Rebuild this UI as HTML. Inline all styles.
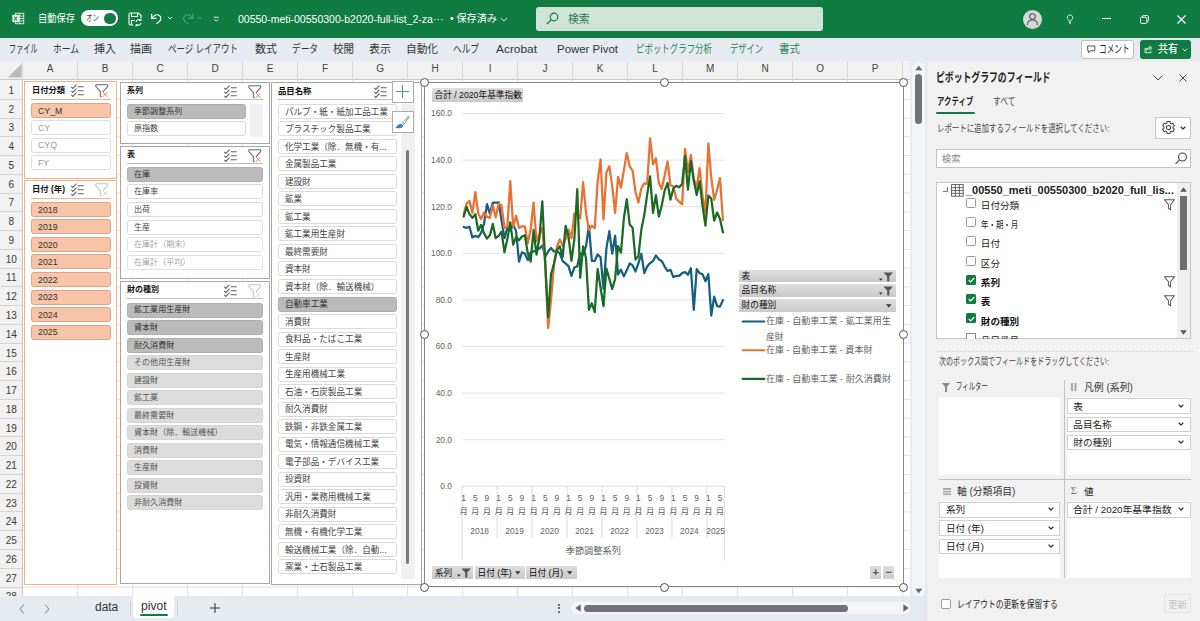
<!DOCTYPE html>
<html lang="ja"><head><meta charset="utf-8"><title>Excel</title>
<style>
*{box-sizing:border-box;margin:0;padding:0}
html,body{width:1200px;height:621px;overflow:hidden;background:#fff}
body{font-family:"Liberation Sans","Noto Sans CJK JP",sans-serif;font-size:12px;color:#222;position:relative}
.abs{position:absolute}
.t{position:absolute;white-space:nowrap;line-height:1}
svg{position:absolute;overflow:visible}
</style></head>
<body>
<!-- grid.build -->
<div class="abs " style="left:0px;top:61px;width:926px;height:535px;background:#fff"></div>
<div class="abs " style="left:0px;top:61px;width:910px;height:19px;background:#f1f1f1;border-bottom:1px solid #c8c8c8"></div>
<svg style="left:7.500px;top:64px" width="13.500" height="13.500" viewBox="0 0 14 14"><path d="M14 0v14H0z" fill="#b9b9b9"/></svg>
<div class="abs " style="left:22.1px;top:61px;width:1px;height:19px;background:#d6d6d6"></div>
<div class="t" style="left:-49.9px;width:200px;text-align:center;top:64.30px;font-size:10px;color:#444;">A</div>
<div class="abs " style="left:77.1px;top:61px;width:1px;height:19px;background:#d6d6d6"></div>
<div class="t" style="left:5.099999999999994px;width:200px;text-align:center;top:64.30px;font-size:10px;color:#444;">B</div>
<div class="abs " style="left:132.1px;top:61px;width:1px;height:19px;background:#d6d6d6"></div>
<div class="t" style="left:60.099999999999994px;width:200px;text-align:center;top:64.30px;font-size:10px;color:#444;">C</div>
<div class="abs " style="left:187.1px;top:61px;width:1px;height:19px;background:#d6d6d6"></div>
<div class="t" style="left:115.1px;width:200px;text-align:center;top:64.30px;font-size:10px;color:#444;">D</div>
<div class="abs " style="left:242.1px;top:61px;width:1px;height:19px;background:#d6d6d6"></div>
<div class="t" style="left:170.10000000000002px;width:200px;text-align:center;top:64.30px;font-size:10px;color:#444;">E</div>
<div class="abs " style="left:297.1px;top:61px;width:1px;height:19px;background:#d6d6d6"></div>
<div class="t" style="left:225.10000000000002px;width:200px;text-align:center;top:64.30px;font-size:10px;color:#444;">F</div>
<div class="abs " style="left:352.1px;top:61px;width:1px;height:19px;background:#d6d6d6"></div>
<div class="t" style="left:280.1px;width:200px;text-align:center;top:64.30px;font-size:10px;color:#444;">G</div>
<div class="abs " style="left:407.1px;top:61px;width:1px;height:19px;background:#d6d6d6"></div>
<div class="t" style="left:335.1px;width:200px;text-align:center;top:64.30px;font-size:10px;color:#444;">H</div>
<div class="abs " style="left:462.1px;top:61px;width:1px;height:19px;background:#d6d6d6"></div>
<div class="t" style="left:390.1px;width:200px;text-align:center;top:64.30px;font-size:10px;color:#444;">I</div>
<div class="abs " style="left:517.1px;top:61px;width:1px;height:19px;background:#d6d6d6"></div>
<div class="t" style="left:445.1px;width:200px;text-align:center;top:64.30px;font-size:10px;color:#444;">J</div>
<div class="abs " style="left:572.1px;top:61px;width:1px;height:19px;background:#d6d6d6"></div>
<div class="t" style="left:500.1px;width:200px;text-align:center;top:64.30px;font-size:10px;color:#444;">K</div>
<div class="abs " style="left:627.1px;top:61px;width:1px;height:19px;background:#d6d6d6"></div>
<div class="t" style="left:555.1px;width:200px;text-align:center;top:64.30px;font-size:10px;color:#444;">L</div>
<div class="abs " style="left:682.1px;top:61px;width:1px;height:19px;background:#d6d6d6"></div>
<div class="t" style="left:610.1px;width:200px;text-align:center;top:64.30px;font-size:10px;color:#444;">M</div>
<div class="abs " style="left:737.1px;top:61px;width:1px;height:19px;background:#d6d6d6"></div>
<div class="t" style="left:665.1px;width:200px;text-align:center;top:64.30px;font-size:10px;color:#444;">N</div>
<div class="abs " style="left:792.1px;top:61px;width:1px;height:19px;background:#d6d6d6"></div>
<div class="t" style="left:720.1px;width:200px;text-align:center;top:64.30px;font-size:10px;color:#444;">O</div>
<div class="abs " style="left:847.1px;top:61px;width:1px;height:19px;background:#d6d6d6"></div>
<div class="t" style="left:775.1px;width:200px;text-align:center;top:64.30px;font-size:10px;color:#444;">P</div>
<div class="abs " style="left:902.1px;top:61px;width:1px;height:19px;background:#d6d6d6"></div>
<div class="abs " style="left:0px;top:80px;width:23px;height:516px;background:#f1f1f1;border-right:1px solid #c8c8c8"></div>
<div class="t" style="left:-88.7px;width:200px;text-align:center;top:85.88px;font-size:10px;color:#3a3a3a;">1</div>
<div class="abs " style="left:0px;top:98.76px;width:22.5px;height:1px;background:#d4d4d4"></div>
<div class="t" style="left:-88.7px;width:200px;text-align:center;top:104.64px;font-size:10px;color:#3a3a3a;">2</div>
<div class="abs " style="left:0px;top:117.52000000000001px;width:22.5px;height:1px;background:#d4d4d4"></div>
<div class="t" style="left:-88.7px;width:200px;text-align:center;top:123.40px;font-size:10px;color:#3a3a3a;">3</div>
<div class="abs " style="left:0px;top:136.28px;width:22.5px;height:1px;background:#d4d4d4"></div>
<div class="t" style="left:-88.7px;width:200px;text-align:center;top:142.16px;font-size:10px;color:#3a3a3a;">4</div>
<div class="abs " style="left:0px;top:155.04000000000002px;width:22.5px;height:1px;background:#d4d4d4"></div>
<div class="t" style="left:-88.7px;width:200px;text-align:center;top:160.92px;font-size:10px;color:#3a3a3a;">5</div>
<div class="abs " style="left:0px;top:173.8px;width:22.5px;height:1px;background:#d4d4d4"></div>
<div class="t" style="left:-88.7px;width:200px;text-align:center;top:179.68px;font-size:10px;color:#3a3a3a;">6</div>
<div class="abs " style="left:0px;top:192.56px;width:22.5px;height:1px;background:#d4d4d4"></div>
<div class="t" style="left:-88.7px;width:200px;text-align:center;top:198.44px;font-size:10px;color:#3a3a3a;">7</div>
<div class="abs " style="left:0px;top:211.32000000000002px;width:22.5px;height:1px;background:#d4d4d4"></div>
<div class="t" style="left:-88.7px;width:200px;text-align:center;top:217.20px;font-size:10px;color:#3a3a3a;">8</div>
<div class="abs " style="left:0px;top:230.08px;width:22.5px;height:1px;background:#d4d4d4"></div>
<div class="t" style="left:-88.7px;width:200px;text-align:center;top:235.96px;font-size:10px;color:#3a3a3a;">9</div>
<div class="abs " style="left:0px;top:248.84px;width:22.5px;height:1px;background:#d4d4d4"></div>
<div class="t" style="left:-88.7px;width:200px;text-align:center;top:254.72px;font-size:10px;color:#3a3a3a;">10</div>
<div class="abs " style="left:0px;top:267.6px;width:22.5px;height:1px;background:#d4d4d4"></div>
<div class="t" style="left:-88.7px;width:200px;text-align:center;top:273.48px;font-size:10px;color:#3a3a3a;">11</div>
<div class="abs " style="left:0px;top:286.36px;width:22.5px;height:1px;background:#d4d4d4"></div>
<div class="t" style="left:-88.7px;width:200px;text-align:center;top:292.24px;font-size:10px;color:#3a3a3a;">12</div>
<div class="abs " style="left:0px;top:305.12px;width:22.5px;height:1px;background:#d4d4d4"></div>
<div class="t" style="left:-88.7px;width:200px;text-align:center;top:311.00px;font-size:10px;color:#3a3a3a;">13</div>
<div class="abs " style="left:0px;top:323.88px;width:22.5px;height:1px;background:#d4d4d4"></div>
<div class="t" style="left:-88.7px;width:200px;text-align:center;top:329.76px;font-size:10px;color:#3a3a3a;">14</div>
<div class="abs " style="left:0px;top:342.64000000000004px;width:22.5px;height:1px;background:#d4d4d4"></div>
<div class="t" style="left:-88.7px;width:200px;text-align:center;top:348.52px;font-size:10px;color:#3a3a3a;">15</div>
<div class="abs " style="left:0px;top:361.40000000000003px;width:22.5px;height:1px;background:#d4d4d4"></div>
<div class="t" style="left:-88.7px;width:200px;text-align:center;top:367.28px;font-size:10px;color:#3a3a3a;">16</div>
<div class="abs " style="left:0px;top:380.16px;width:22.5px;height:1px;background:#d4d4d4"></div>
<div class="t" style="left:-88.7px;width:200px;text-align:center;top:386.04px;font-size:10px;color:#3a3a3a;">17</div>
<div class="abs " style="left:0px;top:398.92px;width:22.5px;height:1px;background:#d4d4d4"></div>
<div class="t" style="left:-88.7px;width:200px;text-align:center;top:404.80px;font-size:10px;color:#3a3a3a;">18</div>
<div class="abs " style="left:0px;top:417.68px;width:22.5px;height:1px;background:#d4d4d4"></div>
<div class="t" style="left:-88.7px;width:200px;text-align:center;top:423.56px;font-size:10px;color:#3a3a3a;">19</div>
<div class="abs " style="left:0px;top:436.44000000000005px;width:22.5px;height:1px;background:#d4d4d4"></div>
<div class="t" style="left:-88.7px;width:200px;text-align:center;top:442.32px;font-size:10px;color:#3a3a3a;">20</div>
<div class="abs " style="left:0px;top:455.20000000000005px;width:22.5px;height:1px;background:#d4d4d4"></div>
<div class="t" style="left:-88.7px;width:200px;text-align:center;top:461.08px;font-size:10px;color:#3a3a3a;">21</div>
<div class="abs " style="left:0px;top:473.96000000000004px;width:22.5px;height:1px;background:#d4d4d4"></div>
<div class="t" style="left:-88.7px;width:200px;text-align:center;top:479.84px;font-size:10px;color:#3a3a3a;">22</div>
<div class="abs " style="left:0px;top:492.72px;width:22.5px;height:1px;background:#d4d4d4"></div>
<div class="t" style="left:-88.7px;width:200px;text-align:center;top:498.60px;font-size:10px;color:#3a3a3a;">23</div>
<div class="abs " style="left:0px;top:511.48px;width:22.5px;height:1px;background:#d4d4d4"></div>
<div class="t" style="left:-88.7px;width:200px;text-align:center;top:517.36px;font-size:10px;color:#3a3a3a;">24</div>
<div class="abs " style="left:0px;top:530.24px;width:22.5px;height:1px;background:#d4d4d4"></div>
<div class="t" style="left:-88.7px;width:200px;text-align:center;top:536.12px;font-size:10px;color:#3a3a3a;">25</div>
<div class="abs " style="left:0px;top:549.0px;width:22.5px;height:1px;background:#d4d4d4"></div>
<div class="t" style="left:-88.7px;width:200px;text-align:center;top:554.88px;font-size:10px;color:#3a3a3a;">26</div>
<div class="abs " style="left:0px;top:567.76px;width:22.5px;height:1px;background:#d4d4d4"></div>
<div class="t" style="left:-88.7px;width:200px;text-align:center;top:573.64px;font-size:10px;color:#3a3a3a;">27</div>
<div class="abs " style="left:0px;top:586.52px;width:22.5px;height:1px;background:#d4d4d4"></div>
<div class="t" style="left:-88.7px;width:200px;text-align:center;top:592.40px;font-size:10px;color:#3a3a3a;">28</div>
<div class="abs " style="left:0px;top:605.2800000000001px;width:22.5px;height:1px;background:#d4d4d4"></div>
<svg style="left:0;top:0" width="926" height="596" stroke="#e1e1e1" stroke-width="1" fill="none"><path d="M23 99.26H910"/><path d="M23 118.02H910"/><path d="M23 136.78H910"/><path d="M23 155.54H910"/><path d="M23 174.30H910"/><path d="M23 193.06H910"/><path d="M23 211.82H910"/><path d="M23 230.58H910"/><path d="M23 249.34H910"/><path d="M23 268.10H910"/><path d="M23 286.86H910"/><path d="M23 305.62H910"/><path d="M23 324.38H910"/><path d="M23 343.14H910"/><path d="M23 361.90H910"/><path d="M23 380.66H910"/><path d="M23 399.42H910"/><path d="M23 418.18H910"/><path d="M23 436.94H910"/><path d="M23 455.70H910"/><path d="M23 474.46H910"/><path d="M23 493.22H910"/><path d="M23 511.98H910"/><path d="M23 530.74H910"/><path d="M23 549.50H910"/><path d="M23 568.26H910"/><path d="M23 587.02H910"/><path d="M23 605.78H910"/><path d="M77.6 80V596"/><path d="M132.6 80V596"/><path d="M187.6 80V596"/><path d="M242.6 80V596"/><path d="M297.6 80V596"/><path d="M352.6 80V596"/><path d="M407.6 80V596"/><path d="M462.6 80V596"/><path d="M517.6 80V596"/><path d="M572.6 80V596"/><path d="M627.6 80V596"/><path d="M682.6 80V596"/><path d="M737.6 80V596"/><path d="M792.6 80V596"/><path d="M847.6 80V596"/><path d="M902.6 80V596"/></svg>
<!-- slicers.build -->
<div class="abs " style="left:23.7px;top:81px;width:93.8px;height:97.5px;background:#fff;border:1px solid #f4b183"></div>
<div class="t" style="left:32px;top:85.85px;font-size:8.5px;color:#111;font-weight:700;transform:scaleX(0.9701);transform-origin:0 50%;">日付分類</div>
<svg style="left:71px;top:83.5px" width="14" height="13" viewBox="0 0 14 13" fill="none" stroke="#606060" stroke-width="1.050"><path d="M6.700 2.700h6M6.700 6.700h6M6.700 10.700h6"/><path d="M.3 2.9l1.500 1.500L5.500 0.6999999999999997M.3 6.9l1.500 1.500L5.500 4.7M.3 10.9l1.500 1.500L5.500 8.7" stroke-width="1.050"/></svg>
<svg style="left:95px;top:83.5px" width="14" height="14" viewBox="0 0 14 14" fill="none"><path d="M5.300 12.600V7.400L.8 2.600V1.300Q.8.800 1.300.8H12.200Q12.700.8 12.700 1.300V2.600L8 7.600" stroke="#6a6a6a" stroke-width="1.100"/><path d="M5.300 12.600H6.600" stroke="#6a6a6a" stroke-width="1.100"/><path d="M7.900 8.100l4.600 4.600M12.500 8.100L7.900 12.700" stroke="#e8703a" stroke-width="0.9"/></svg>
<div class="abs " style="left:31px;top:98.5px;width:80px;height:1px;background:#f4b183"></div>
<div class="abs " style="left:31px;top:103.0px;width:80px;height:15px;background:#f8c4a8;border:1px solid #d9a58b;border-radius:2.500px"></div>
<div class="t" style="left:38px;top:106.60px;font-size:8.8px;color:#333;">CY_M</div>
<div class="abs " style="left:31px;top:120.4px;width:80px;height:15px;background:#fff;border:1px solid #dedede;border-radius:2.500px"></div>
<div class="t" style="left:38px;top:124.00px;font-size:8.8px;color:#9a9a9a;">CY</div>
<div class="abs " style="left:31px;top:137.8px;width:80px;height:15px;background:#fff;border:1px solid #dedede;border-radius:2.500px"></div>
<div class="t" style="left:38px;top:141.40px;font-size:8.8px;color:#9a9a9a;">CYQ</div>
<div class="abs " style="left:31px;top:155.2px;width:80px;height:15px;background:#fff;border:1px solid #dedede;border-radius:2.500px"></div>
<div class="t" style="left:38px;top:158.80px;font-size:8.8px;color:#9a9a9a;">FY</div>
<div class="abs " style="left:23.7px;top:180.2px;width:93.8px;height:404.8px;background:#fff;border:1px solid #f4b183"></div>
<div class="t" style="left:32px;top:185.05px;font-size:8.5px;color:#111;font-weight:700;transform:scaleX(0.9842);transform-origin:0 50%;">日付 (年)</div>
<svg style="left:71px;top:182.7px" width="14" height="13" viewBox="0 0 14 13" fill="none" stroke="#606060" stroke-width="1.050"><path d="M6.700 2.700h6M6.700 6.700h6M6.700 10.700h6"/><path d="M.3 2.9l1.500 1.500L5.500 0.6999999999999997M.3 6.9l1.500 1.500L5.500 4.7M.3 10.9l1.500 1.500L5.500 8.7" stroke-width="1.050"/></svg>
<svg style="left:95px;top:182.7px" width="14" height="14" viewBox="0 0 14 14" fill="none"><path d="M5.300 12.600V7.400L.8 2.600V1.300Q.8.800 1.300.8H12.200Q12.700.8 12.700 1.300V2.600L8 7.600" stroke="#c4c4c4" stroke-width="1.100"/><path d="M5.300 12.600H6.600" stroke="#c4c4c4" stroke-width="1.100"/><path d="M7.900 8.100l4.600 4.600M12.500 8.100L7.900 12.700" stroke="#d0d0d0" stroke-width="0.9"/></svg>
<div class="abs " style="left:31px;top:197.7px;width:80px;height:1px;background:#f4b183"></div>
<div class="abs " style="left:31px;top:201.9px;width:80px;height:15px;background:#f8c4a8;border:1px solid #d9a58b;border-radius:2.500px"></div>
<div class="t" style="left:38px;top:205.50px;font-size:8.8px;color:#333;">2018</div>
<div class="abs " style="left:31px;top:219.42000000000002px;width:80px;height:15px;background:#f8c4a8;border:1px solid #d9a58b;border-radius:2.500px"></div>
<div class="t" style="left:38px;top:223.02px;font-size:8.8px;color:#333;">2019</div>
<div class="abs " style="left:31px;top:236.94px;width:80px;height:15px;background:#f8c4a8;border:1px solid #d9a58b;border-radius:2.500px"></div>
<div class="t" style="left:38px;top:240.54px;font-size:8.8px;color:#333;">2020</div>
<div class="abs " style="left:31px;top:254.46000000000004px;width:80px;height:15px;background:#f8c4a8;border:1px solid #d9a58b;border-radius:2.500px"></div>
<div class="t" style="left:38px;top:258.06px;font-size:8.8px;color:#333;">2021</div>
<div class="abs " style="left:31px;top:271.98px;width:80px;height:15px;background:#f8c4a8;border:1px solid #d9a58b;border-radius:2.500px"></div>
<div class="t" style="left:38px;top:275.58px;font-size:8.8px;color:#333;">2022</div>
<div class="abs " style="left:31px;top:289.5px;width:80px;height:15px;background:#f8c4a8;border:1px solid #d9a58b;border-radius:2.500px"></div>
<div class="t" style="left:38px;top:293.10px;font-size:8.8px;color:#333;">2023</div>
<div class="abs " style="left:31px;top:307.02px;width:80px;height:15px;background:#f8c4a8;border:1px solid #d9a58b;border-radius:2.500px"></div>
<div class="t" style="left:38px;top:310.62px;font-size:8.8px;color:#333;">2024</div>
<div class="abs " style="left:31px;top:324.54px;width:80px;height:15px;background:#f8c4a8;border:1px solid #d9a58b;border-radius:2.500px"></div>
<div class="t" style="left:38px;top:328.14px;font-size:8.8px;color:#333;">2025</div>
<div class="abs " style="left:120px;top:82.4px;width:149.8px;height:61.79999999999998px;background:#fff;border:1px solid #a6a6a6"></div>
<div class="t" style="left:127px;top:87.40px;font-size:8.0px;color:#111;font-weight:700;">系列</div>
<svg style="left:224px;top:85.4px" width="14" height="13" viewBox="0 0 14 13" fill="none" stroke="#606060" stroke-width="1.050"><path d="M6.700 2.700h6M6.700 6.700h6M6.700 10.700h6"/><path d="M.3 2.9l1.500 1.500L5.500 0.6999999999999997M.3 6.9l1.500 1.500L5.500 4.7M.3 10.9l1.500 1.500L5.500 8.7" stroke-width="1.050"/></svg>
<svg style="left:247.5px;top:85.4px" width="14" height="14" viewBox="0 0 14 14" fill="none"><path d="M5.300 12.600V7.400L.8 2.600V1.300Q.8.800 1.300.8H12.200Q12.700.8 12.700 1.300V2.600L8 7.600" stroke="#6a6a6a" stroke-width="1.100"/><path d="M5.300 12.600H6.600" stroke="#6a6a6a" stroke-width="1.100"/><path d="M7.900 8.100l4.600 4.600M12.500 8.100L7.900 12.700" stroke="#e8703a" stroke-width="0.9"/></svg>
<div class="abs " style="left:127px;top:99.2px;width:136.3px;height:1px;background:#bfbfbf"></div>
<div class="abs " style="left:127px;top:103.8px;width:119px;height:15px;background:#bbbbbb;border:1px solid #afafaf;border-radius:2.500px"></div>
<div class="t" style="left:134px;top:107.77px;font-size:8.05px;color:#333;">季節調整系列</div>
<div class="abs " style="left:127px;top:121.19999999999999px;width:119px;height:15px;background:#fff;border:1px solid #dadada;border-radius:2.500px"></div>
<div class="t" style="left:134px;top:125.17px;font-size:8.05px;color:#444;">原指数</div>
<div class="abs " style="left:249.5px;top:104px;width:13.5px;height:32.5px;background:#f0f0f0"></div>
<div class="abs " style="left:120px;top:146px;width:149.8px;height:133px;background:#fff;border:1px solid #a6a6a6"></div>
<div class="t" style="left:127px;top:151.00px;font-size:8.0px;color:#111;font-weight:700;">表</div>
<svg style="left:224px;top:149px" width="14" height="13" viewBox="0 0 14 13" fill="none" stroke="#606060" stroke-width="1.050"><path d="M6.700 2.700h6M6.700 6.700h6M6.700 10.700h6"/><path d="M.3 2.9l1.500 1.500L5.500 0.6999999999999997M.3 6.9l1.500 1.500L5.500 4.7M.3 10.9l1.500 1.500L5.500 8.7" stroke-width="1.050"/></svg>
<svg style="left:247.5px;top:149px" width="14" height="14" viewBox="0 0 14 14" fill="none"><path d="M5.300 12.600V7.400L.8 2.600V1.300Q.8.800 1.300.8H12.200Q12.700.8 12.700 1.300V2.600L8 7.600" stroke="#6a6a6a" stroke-width="1.100"/><path d="M5.300 12.600H6.600" stroke="#6a6a6a" stroke-width="1.100"/><path d="M7.900 8.100l4.600 4.600M12.500 8.100L7.900 12.700" stroke="#e8703a" stroke-width="0.9"/></svg>
<div class="abs " style="left:127px;top:162.8px;width:136.3px;height:1px;background:#bfbfbf"></div>
<div class="abs " style="left:127px;top:166.9px;width:136px;height:15px;background:#bbbbbb;border:1px solid #afafaf;border-radius:2.500px"></div>
<div class="t" style="left:134px;top:170.88px;font-size:8.05px;color:#333;">在庫</div>
<div class="abs " style="left:127px;top:184.45000000000002px;width:136px;height:15px;background:#fff;border:1px solid #dadada;border-radius:2.500px"></div>
<div class="t" style="left:134px;top:188.43px;font-size:8.05px;color:#444;">在庫率</div>
<div class="abs " style="left:127px;top:202.0px;width:136px;height:15px;background:#fff;border:1px solid #dadada;border-radius:2.500px"></div>
<div class="t" style="left:134px;top:205.97px;font-size:8.05px;color:#444;">出荷</div>
<div class="abs " style="left:127px;top:219.55px;width:136px;height:15px;background:#fff;border:1px solid #dadada;border-radius:2.500px"></div>
<div class="t" style="left:134px;top:223.53px;font-size:8.05px;color:#444;">生産</div>
<div class="abs " style="left:127px;top:237.10000000000002px;width:136px;height:15px;background:#fff;border:1px solid #e1e1e1;border-radius:2.500px"></div>
<div class="t" style="left:134px;top:241.08px;font-size:8.05px;color:#a5a5a5;">在庫計（期末）</div>
<div class="abs " style="left:127px;top:254.64999999999998px;width:136px;height:15px;background:#fff;border:1px solid #e1e1e1;border-radius:2.500px"></div>
<div class="t" style="left:134px;top:258.62px;font-size:8.05px;color:#a5a5a5;">在庫計（平均）</div>
<div class="abs " style="left:120px;top:281.3px;width:149.8px;height:303.2px;background:#fff;border:1px solid #a6a6a6"></div>
<div class="t" style="left:127px;top:286.30px;font-size:8.0px;color:#111;font-weight:700;">財の種別</div>
<svg style="left:224px;top:284.3px" width="14" height="13" viewBox="0 0 14 13" fill="none" stroke="#606060" stroke-width="1.050"><path d="M6.700 2.700h6M6.700 6.700h6M6.700 10.700h6"/><path d="M.3 2.9l1.500 1.500L5.500 0.6999999999999997M.3 6.9l1.500 1.500L5.500 4.7M.3 10.9l1.500 1.500L5.500 8.7" stroke-width="1.050"/></svg>
<svg style="left:247.5px;top:284.3px" width="14" height="14" viewBox="0 0 14 14" fill="none"><path d="M5.300 12.600V7.400L.8 2.600V1.300Q.8.800 1.300.8H12.200Q12.700.8 12.700 1.300V2.600L8 7.600" stroke="#c4c4c4" stroke-width="1.100"/><path d="M5.300 12.600H6.600" stroke="#c4c4c4" stroke-width="1.100"/><path d="M7.900 8.100l4.600 4.600M12.500 8.100L7.900 12.700" stroke="#d0d0d0" stroke-width="0.9"/></svg>
<div class="abs " style="left:127px;top:298.1px;width:136.3px;height:1px;background:#bfbfbf"></div>
<div class="abs " style="left:127px;top:302.5px;width:136px;height:15px;background:#bbbbbb;border:1px solid #afafaf;border-radius:2.500px"></div>
<div class="t" style="left:134px;top:306.48px;font-size:8.05px;color:#333;">鉱工業用生産財</div>
<div class="abs " style="left:127px;top:320.02px;width:136px;height:15px;background:#bbbbbb;border:1px solid #afafaf;border-radius:2.500px"></div>
<div class="t" style="left:134px;top:324.00px;font-size:8.05px;color:#333;">資本財</div>
<div class="abs " style="left:127px;top:337.54px;width:136px;height:15px;background:#bbbbbb;border:1px solid #afafaf;border-radius:2.500px"></div>
<div class="t" style="left:134px;top:341.52px;font-size:8.05px;color:#333;">耐久消費財</div>
<div class="abs " style="left:127px;top:355.06px;width:136px;height:15px;background:#dcdcdc;border:1px solid #d4d4d4;border-radius:2.500px"></div>
<div class="t" style="left:134px;top:359.04px;font-size:8.05px;color:#555;">その他用生産財</div>
<div class="abs " style="left:127px;top:372.58px;width:136px;height:15px;background:#dcdcdc;border:1px solid #d4d4d4;border-radius:2.500px"></div>
<div class="t" style="left:134px;top:376.56px;font-size:8.05px;color:#555;">建設財</div>
<div class="abs " style="left:127px;top:390.1px;width:136px;height:15px;background:#dcdcdc;border:1px solid #d4d4d4;border-radius:2.500px"></div>
<div class="t" style="left:134px;top:394.08px;font-size:8.05px;color:#555;">鉱工業</div>
<div class="abs " style="left:127px;top:407.62px;width:136px;height:15px;background:#dcdcdc;border:1px solid #d4d4d4;border-radius:2.500px"></div>
<div class="t" style="left:134px;top:411.60px;font-size:8.05px;color:#555;">最終需要財</div>
<div class="abs " style="left:127px;top:425.14px;width:136px;height:15px;background:#dcdcdc;border:1px solid #d4d4d4;border-radius:2.500px"></div>
<div class="t" style="left:134px;top:429.12px;font-size:8.05px;color:#555;">資本財（除．輸送機械）</div>
<div class="abs " style="left:127px;top:442.65999999999997px;width:136px;height:15px;background:#dcdcdc;border:1px solid #d4d4d4;border-radius:2.500px"></div>
<div class="t" style="left:134px;top:446.63px;font-size:8.05px;color:#555;">消費財</div>
<div class="abs " style="left:127px;top:460.18px;width:136px;height:15px;background:#dcdcdc;border:1px solid #d4d4d4;border-radius:2.500px"></div>
<div class="t" style="left:134px;top:464.16px;font-size:8.05px;color:#555;">生産財</div>
<div class="abs " style="left:127px;top:477.7px;width:136px;height:15px;background:#dcdcdc;border:1px solid #d4d4d4;border-radius:2.500px"></div>
<div class="t" style="left:134px;top:481.68px;font-size:8.05px;color:#555;">投資財</div>
<div class="abs " style="left:127px;top:495.22px;width:136px;height:15px;background:#dcdcdc;border:1px solid #d4d4d4;border-radius:2.500px"></div>
<div class="t" style="left:134px;top:499.20px;font-size:8.05px;color:#555;">非耐久消費財</div>
<div class="abs " style="left:271px;top:82.4px;width:150.5px;height:502.6px;background:#fff;border:1px solid #a6a6a6"></div>
<div class="t" style="left:277.9px;top:87.20px;font-size:8.4px;color:#111;font-weight:700;">品目名称</div>
<svg style="left:374px;top:85.4px" width="14" height="13" viewBox="0 0 14 13" fill="none" stroke="#606060" stroke-width="1.050"><path d="M6.700 2.700h6M6.700 6.700h6M6.700 10.700h6"/><path d="M.3 2.9l1.500 1.500L5.500 0.6999999999999997M.3 6.9l1.500 1.500L5.500 4.7M.3 10.9l1.500 1.500L5.500 8.7" stroke-width="1.050"/></svg>
<div class="abs " style="left:277.9px;top:99.2px;width:137.10000000000002px;height:1px;background:#bfbfbf"></div>
<div class="abs " style="left:277.9px;top:103.8px;width:119.60000000000002px;height:15px;background:#fff;border:1px solid #dadada;border-radius:2.500px"></div>
<div class="t" style="left:284.9px;top:107.50px;font-size:8.6px;color:#444;">パルプ・紙・紙加工品工業</div>
<div class="abs " style="left:277.9px;top:121.32px;width:119.60000000000002px;height:15px;background:#fff;border:1px solid #dadada;border-radius:2.500px"></div>
<div class="t" style="left:284.9px;top:125.02px;font-size:8.6px;color:#444;">プラスチック製品工業</div>
<div class="abs " style="left:277.9px;top:138.84px;width:119.60000000000002px;height:15px;background:#fff;border:1px solid #dadada;border-radius:2.500px"></div>
<div class="t" style="left:284.9px;top:142.54px;font-size:8.6px;color:#444;">化学工業（除．無機・有...</div>
<div class="abs " style="left:277.9px;top:156.36px;width:119.60000000000002px;height:15px;background:#fff;border:1px solid #dadada;border-radius:2.500px"></div>
<div class="t" style="left:284.9px;top:160.06px;font-size:8.6px;color:#444;">金属製品工業</div>
<div class="abs " style="left:277.9px;top:173.88px;width:119.60000000000002px;height:15px;background:#fff;border:1px solid #dadada;border-radius:2.500px"></div>
<div class="t" style="left:284.9px;top:177.58px;font-size:8.6px;color:#444;">建設財</div>
<div class="abs " style="left:277.9px;top:191.39999999999998px;width:119.60000000000002px;height:15px;background:#fff;border:1px solid #dadada;border-radius:2.500px"></div>
<div class="t" style="left:284.9px;top:195.10px;font-size:8.6px;color:#444;">鉱業</div>
<div class="abs " style="left:277.9px;top:208.92000000000002px;width:119.60000000000002px;height:15px;background:#fff;border:1px solid #dadada;border-radius:2.500px"></div>
<div class="t" style="left:284.9px;top:212.62px;font-size:8.6px;color:#444;">鉱工業</div>
<div class="abs " style="left:277.9px;top:226.44px;width:119.60000000000002px;height:15px;background:#fff;border:1px solid #dadada;border-radius:2.500px"></div>
<div class="t" style="left:284.9px;top:230.14px;font-size:8.6px;color:#444;">鉱工業用生産財</div>
<div class="abs " style="left:277.9px;top:243.95999999999998px;width:119.60000000000002px;height:15px;background:#fff;border:1px solid #dadada;border-radius:2.500px"></div>
<div class="t" style="left:284.9px;top:247.66px;font-size:8.6px;color:#444;">最終需要財</div>
<div class="abs " style="left:277.9px;top:261.48px;width:119.60000000000002px;height:15px;background:#fff;border:1px solid #dadada;border-radius:2.500px"></div>
<div class="t" style="left:284.9px;top:265.18px;font-size:8.6px;color:#444;">資本財</div>
<div class="abs " style="left:277.9px;top:279.0px;width:119.60000000000002px;height:15px;background:#fff;border:1px solid #dadada;border-radius:2.500px"></div>
<div class="t" style="left:284.9px;top:282.70px;font-size:8.6px;color:#444;">資本財（除．輸送機械）</div>
<div class="abs " style="left:277.9px;top:296.52px;width:119.60000000000002px;height:15px;background:#bbbbbb;border:1px solid #afafaf;border-radius:2.500px"></div>
<div class="t" style="left:284.9px;top:300.22px;font-size:8.6px;color:#333;">自動車工業</div>
<div class="abs " style="left:277.9px;top:314.04px;width:119.60000000000002px;height:15px;background:#fff;border:1px solid #dadada;border-radius:2.500px"></div>
<div class="t" style="left:284.9px;top:317.74px;font-size:8.6px;color:#444;">消費財</div>
<div class="abs " style="left:277.9px;top:331.56px;width:119.60000000000002px;height:15px;background:#fff;border:1px solid #dadada;border-radius:2.500px"></div>
<div class="t" style="left:284.9px;top:335.26px;font-size:8.6px;color:#444;">食料品・たばこ工業</div>
<div class="abs " style="left:277.9px;top:349.08px;width:119.60000000000002px;height:15px;background:#fff;border:1px solid #dadada;border-radius:2.500px"></div>
<div class="t" style="left:284.9px;top:352.78px;font-size:8.6px;color:#444;">生産財</div>
<div class="abs " style="left:277.9px;top:366.6px;width:119.60000000000002px;height:15px;background:#fff;border:1px solid #dadada;border-radius:2.500px"></div>
<div class="t" style="left:284.9px;top:370.30px;font-size:8.6px;color:#444;">生産用機械工業</div>
<div class="abs " style="left:277.9px;top:384.12px;width:119.60000000000002px;height:15px;background:#fff;border:1px solid #dadada;border-radius:2.500px"></div>
<div class="t" style="left:284.9px;top:387.82px;font-size:8.6px;color:#444;">石油・石炭製品工業</div>
<div class="abs " style="left:277.9px;top:401.64px;width:119.60000000000002px;height:15px;background:#fff;border:1px solid #dadada;border-radius:2.500px"></div>
<div class="t" style="left:284.9px;top:405.34px;font-size:8.6px;color:#444;">耐久消費財</div>
<div class="abs " style="left:277.9px;top:419.16px;width:119.60000000000002px;height:15px;background:#fff;border:1px solid #dadada;border-radius:2.500px"></div>
<div class="t" style="left:284.9px;top:422.86px;font-size:8.6px;color:#444;">鉄鋼・非鉄金属工業</div>
<div class="abs " style="left:277.9px;top:436.68px;width:119.60000000000002px;height:15px;background:#fff;border:1px solid #dadada;border-radius:2.500px"></div>
<div class="t" style="left:284.9px;top:440.38px;font-size:8.6px;color:#444;">電気・情報通信機械工業</div>
<div class="abs " style="left:277.9px;top:454.2px;width:119.60000000000002px;height:15px;background:#fff;border:1px solid #dadada;border-radius:2.500px"></div>
<div class="t" style="left:284.9px;top:457.90px;font-size:8.6px;color:#444;">電子部品・デバイス工業</div>
<div class="abs " style="left:277.9px;top:471.72px;width:119.60000000000002px;height:15px;background:#fff;border:1px solid #dadada;border-radius:2.500px"></div>
<div class="t" style="left:284.9px;top:475.42px;font-size:8.6px;color:#444;">投資財</div>
<div class="abs " style="left:277.9px;top:489.24px;width:119.60000000000002px;height:15px;background:#fff;border:1px solid #dadada;border-radius:2.500px"></div>
<div class="t" style="left:284.9px;top:492.94px;font-size:8.6px;color:#444;">汎用・業務用機械工業</div>
<div class="abs " style="left:277.9px;top:506.76px;width:119.60000000000002px;height:15px;background:#fff;border:1px solid #dadada;border-radius:2.500px"></div>
<div class="t" style="left:284.9px;top:510.46px;font-size:8.6px;color:#444;">非耐久消費財</div>
<div class="abs " style="left:277.9px;top:524.28px;width:119.60000000000002px;height:15px;background:#fff;border:1px solid #dadada;border-radius:2.500px"></div>
<div class="t" style="left:284.9px;top:527.98px;font-size:8.6px;color:#444;">無機・有機化学工業</div>
<div class="abs " style="left:277.9px;top:541.8px;width:119.60000000000002px;height:15px;background:#fff;border:1px solid #dadada;border-radius:2.500px"></div>
<div class="t" style="left:284.9px;top:545.50px;font-size:8.6px;color:#444;">輸送機械工業（除．自動...</div>
<div class="abs " style="left:277.9px;top:559.3199999999999px;width:119.60000000000002px;height:15px;background:#fff;border:1px solid #dadada;border-radius:2.500px"></div>
<div class="t" style="left:284.9px;top:563.02px;font-size:8.6px;color:#444;">窯業・土石製品工業</div>
<div class="abs " style="left:400.5px;top:104px;width:14px;height:475px;background:#f0f0f0"></div>
<div class="abs " style="left:405.8px;top:150px;width:3px;height:414px;background:#7a7a7a;border-radius:1.500px"></div>
<!-- chart.build -->
<div class="abs " style="left:423.8px;top:81.6px;width:480.7px;height:505.9px;background:#fff;border:1.400px solid #868686"></div>
<div class="abs " style="left:432px;top:88px;width:91px;height:14px;background:linear-gradient(#dedede,#c9c9c9)"></div>
<div class="t" style="left:434.5px;top:90.95px;font-size:8.7px;color:#111;">合計 / 2020年基準指数</div>
<svg style="left:513.2px;top:93.7px" width="5.500" height="3.700" viewBox="0 0 6 4"><path d="M0 .3h6L3 3.700z" fill="#333"/></svg>
<svg style="left:0;top:0" width="926" height="600"><path d="M462.2 439.70H724.4" stroke="#e3e3e3" stroke-width="1"/><path d="M462.2 393.10H724.4" stroke="#e3e3e3" stroke-width="1"/><path d="M462.2 346.50H724.4" stroke="#e3e3e3" stroke-width="1"/><path d="M462.2 299.90H724.4" stroke="#e3e3e3" stroke-width="1"/><path d="M462.2 253.30H724.4" stroke="#e3e3e3" stroke-width="1"/><path d="M462.2 206.70H724.4" stroke="#e3e3e3" stroke-width="1"/><path d="M462.2 160.10H724.4" stroke="#e3e3e3" stroke-width="1"/><path d="M462.2 113.50H724.4" stroke="#e3e3e3" stroke-width="1"/><path d="M462.2 486.3H724.4M462.20 486.3V560.5M497.16 486.3V538M532.11 486.3V538M567.07 486.3V538M602.02 486.3V538M636.98 486.3V538M671.94 486.3V538M706.89 486.3V538M724.37 486.3V560.5" stroke="#dcdcdc" stroke-width="1" fill="none"/><path d="M463.66 226.97 L466.57 227.90 L469.48 226.74 L472.40 237.46 L475.31 235.83 L478.22 236.99 L481.13 232.80 L484.05 223.48 L486.96 204.14 L489.87 213.69 L492.79 202.51 L495.70 202.74 L498.61 202.27 L501.53 220.21 L504.44 238.16 L507.35 228.14 L510.26 230.00 L513.18 224.64 L516.09 231.16 L519.00 261.69 L521.92 252.37 L524.83 253.53 L527.74 260.06 L530.66 252.37 L533.57 251.44 L536.48 250.27 L539.39 248.64 L542.31 245.38 L545.22 256.80 L548.13 251.44 L551.05 247.94 L553.96 251.44 L556.87 250.74 L559.79 253.53 L562.70 261.22 L565.61 263.32 L568.52 266.12 L571.44 275.90 L574.35 267.51 L577.26 266.35 L580.18 253.30 L583.09 254.70 L586.00 246.31 L588.92 225.81 L591.83 260.99 L594.74 260.99 L597.65 254.47 L600.57 257.26 L603.48 288.95 L606.39 248.64 L609.31 231.16 L612.22 253.53 L615.13 235.59 L618.05 274.50 L620.96 269.61 L623.87 276.37 L626.78 270.31 L629.70 263.32 L632.61 265.42 L635.52 271.47 L638.44 263.09 L641.35 253.77 L644.26 273.11 L647.18 266.58 L650.09 263.09 L653.00 260.99 L655.91 255.40 L658.83 259.36 L661.74 260.99 L664.65 266.58 L667.57 271.01 L670.48 269.84 L673.39 277.07 L676.31 275.90 L679.22 275.90 L682.13 273.11 L685.04 271.94 L687.96 274.74 L690.87 268.21 L693.78 309.92 L696.70 269.14 L699.61 273.11 L702.52 274.27 L705.44 281.26 L708.35 274.27 L711.26 315.51 L714.17 296.64 L717.09 306.19 L720.00 306.66 L722.91 300.13" stroke="#156082" stroke-width="2.25" fill="none" stroke-linejoin="round" stroke-linecap="round"/><path d="M463.66 214.62 L466.57 203.67 L469.48 200.88 L472.40 212.99 L475.31 192.02 L478.22 213.46 L481.13 219.05 L484.05 212.52 L486.96 216.72 L489.87 217.88 L492.79 205.30 L495.70 217.42 L498.61 203.67 L501.53 205.30 L504.44 227.90 L507.35 226.27 L510.26 181.07 L513.18 226.74 L516.09 215.79 L519.00 227.90 L521.92 226.27 L524.83 226.27 L527.74 243.51 L530.66 229.30 L533.57 202.74 L536.48 241.42 L539.39 234.66 L542.31 227.67 L545.22 264.95 L548.13 328.09 L551.05 299.90 L553.96 265.42 L556.87 247.01 L559.79 239.32 L562.70 245.84 L565.61 239.32 L568.52 229.53 L571.44 238.16 L574.35 213.69 L577.26 213.69 L580.18 218.35 L583.09 182.00 L586.00 212.29 L588.92 230.00 L591.83 225.81 L594.74 228.14 L597.65 181.54 L600.57 159.40 L603.48 219.51 L606.39 172.45 L609.31 166.16 L612.22 186.20 L615.13 212.99 L618.05 176.88 L620.96 187.83 L623.87 170.12 L626.78 153.11 L629.70 166.39 L632.61 170.82 L635.52 192.25 L638.44 202.51 L641.35 188.29 L644.26 183.40 L647.18 183.87 L650.09 138.43 L653.00 164.29 L655.91 158.24 L658.83 182.93 L661.74 188.99 L664.65 175.25 L667.57 161.50 L670.48 185.26 L673.39 186.20 L676.31 199.01 L679.22 201.57 L682.13 204.37 L685.04 148.92 L687.96 171.98 L690.87 154.97 L693.78 178.74 L696.70 187.36 L699.61 168.02 L702.52 196.21 L705.44 212.52 L708.35 143.32 L711.26 177.57 L714.17 199.94 L717.09 189.69 L720.00 178.04 L722.91 220.21" stroke="#E97132" stroke-width="2.25" fill="none" stroke-linejoin="round" stroke-linecap="round"/><path d="M463.66 216.72 L466.57 206.93 L469.48 214.16 L472.40 217.88 L475.31 214.16 L478.22 230.70 L481.13 224.87 L484.05 233.26 L486.96 238.62 L489.87 235.36 L492.79 223.94 L495.70 238.16 L498.61 235.83 L501.53 231.63 L504.44 252.37 L507.35 239.32 L510.26 222.31 L513.18 244.68 L516.09 236.99 L519.00 240.25 L521.92 236.52 L524.83 235.36 L527.74 253.07 L530.66 261.69 L533.57 230.00 L536.48 254.70 L539.39 238.16 L542.31 201.34 L545.22 262.62 L548.13 317.14 L551.05 274.27 L553.96 263.78 L556.87 250.27 L559.79 246.31 L562.70 256.80 L565.61 225.81 L568.52 236.99 L571.44 260.76 L574.35 239.32 L577.26 189.23 L580.18 277.76 L583.09 246.31 L586.00 257.96 L588.92 309.92 L591.83 303.16 L594.74 312.25 L597.65 269.14 L600.57 287.55 L603.48 306.19 L606.39 268.68 L609.31 278.70 L612.22 288.95 L615.13 278.70 L618.05 246.08 L620.96 252.60 L623.87 218.35 L626.78 199.24 L629.70 224.41 L632.61 227.90 L635.52 259.59 L638.44 256.10 L641.35 229.53 L644.26 215.09 L647.18 194.35 L650.09 176.41 L653.00 212.99 L655.91 195.05 L658.83 216.72 L661.74 205.54 L664.65 190.62 L667.57 182.93 L670.48 199.71 L673.39 188.53 L676.31 185.73 L679.22 187.36 L682.13 184.10 L685.04 156.14 L687.96 189.69 L690.87 161.03 L693.78 180.84 L696.70 195.05 L699.61 181.30 L702.52 205.54 L705.44 225.57 L708.35 195.52 L711.26 198.55 L714.17 220.68 L717.09 212.52 L720.00 219.05 L722.91 232.33" stroke="#196B24" stroke-width="2.25" fill="none" stroke-linejoin="round" stroke-linecap="round"/><path d="M742.600 321.5H764.300" stroke="#156082" stroke-width="2.100" stroke-linecap="round"/><path d="M742.600 350.2H764.300" stroke="#E97132" stroke-width="2.100" stroke-linecap="round"/><path d="M742.600 378.9H764.300" stroke="#196B24" stroke-width="2.100" stroke-linecap="round"/></svg>
<div class="t" style="left:412px;width:40px;text-align:right;top:482.10px;font-size:8.400px;color:#5f5f5f">0.0</div>
<div class="t" style="left:412px;width:40px;text-align:right;top:435.50px;font-size:8.400px;color:#5f5f5f">20.0</div>
<div class="t" style="left:412px;width:40px;text-align:right;top:388.90px;font-size:8.400px;color:#5f5f5f">40.0</div>
<div class="t" style="left:412px;width:40px;text-align:right;top:342.30px;font-size:8.400px;color:#5f5f5f">60.0</div>
<div class="t" style="left:412px;width:40px;text-align:right;top:295.70px;font-size:8.400px;color:#5f5f5f">80.0</div>
<div class="t" style="left:412px;width:40px;text-align:right;top:249.10px;font-size:8.400px;color:#5f5f5f">100.0</div>
<div class="t" style="left:412px;width:40px;text-align:right;top:202.50px;font-size:8.400px;color:#5f5f5f">120.0</div>
<div class="t" style="left:412px;width:40px;text-align:right;top:155.90px;font-size:8.400px;color:#5f5f5f">140.0</div>
<div class="t" style="left:412px;width:40px;text-align:right;top:109.30px;font-size:8.400px;color:#5f5f5f">160.0</div>
<div class="t" style="left:363.6565px;width:200px;text-align:center;top:494.30px;font-size:8.4px;color:#5f5f5f;">1</div>
<div class="t" style="left:363.6565px;width:200px;text-align:center;top:507.10px;font-size:8.4px;color:#5f5f5f;">月</div>
<div class="t" style="left:375.3085px;width:200px;text-align:center;top:494.30px;font-size:8.4px;color:#5f5f5f;">5</div>
<div class="t" style="left:375.3085px;width:200px;text-align:center;top:507.10px;font-size:8.4px;color:#5f5f5f;">月</div>
<div class="t" style="left:386.96049999999997px;width:200px;text-align:center;top:494.30px;font-size:8.4px;color:#5f5f5f;">9</div>
<div class="t" style="left:386.96049999999997px;width:200px;text-align:center;top:507.10px;font-size:8.4px;color:#5f5f5f;">月</div>
<div class="t" style="left:398.61249999999995px;width:200px;text-align:center;top:494.30px;font-size:8.4px;color:#5f5f5f;">1</div>
<div class="t" style="left:398.61249999999995px;width:200px;text-align:center;top:507.10px;font-size:8.4px;color:#5f5f5f;">月</div>
<div class="t" style="left:410.2645px;width:200px;text-align:center;top:494.30px;font-size:8.4px;color:#5f5f5f;">5</div>
<div class="t" style="left:410.2645px;width:200px;text-align:center;top:507.10px;font-size:8.4px;color:#5f5f5f;">月</div>
<div class="t" style="left:421.91650000000004px;width:200px;text-align:center;top:494.30px;font-size:8.4px;color:#5f5f5f;">9</div>
<div class="t" style="left:421.91650000000004px;width:200px;text-align:center;top:507.10px;font-size:8.4px;color:#5f5f5f;">月</div>
<div class="t" style="left:433.5685px;width:200px;text-align:center;top:494.30px;font-size:8.4px;color:#5f5f5f;">1</div>
<div class="t" style="left:433.5685px;width:200px;text-align:center;top:507.10px;font-size:8.4px;color:#5f5f5f;">月</div>
<div class="t" style="left:445.2205px;width:200px;text-align:center;top:494.30px;font-size:8.4px;color:#5f5f5f;">5</div>
<div class="t" style="left:445.2205px;width:200px;text-align:center;top:507.10px;font-size:8.4px;color:#5f5f5f;">月</div>
<div class="t" style="left:456.87249999999995px;width:200px;text-align:center;top:494.30px;font-size:8.4px;color:#5f5f5f;">9</div>
<div class="t" style="left:456.87249999999995px;width:200px;text-align:center;top:507.10px;font-size:8.4px;color:#5f5f5f;">月</div>
<div class="t" style="left:468.5245px;width:200px;text-align:center;top:494.30px;font-size:8.4px;color:#5f5f5f;">1</div>
<div class="t" style="left:468.5245px;width:200px;text-align:center;top:507.10px;font-size:8.4px;color:#5f5f5f;">月</div>
<div class="t" style="left:480.17650000000003px;width:200px;text-align:center;top:494.30px;font-size:8.4px;color:#5f5f5f;">5</div>
<div class="t" style="left:480.17650000000003px;width:200px;text-align:center;top:507.10px;font-size:8.4px;color:#5f5f5f;">月</div>
<div class="t" style="left:491.82849999999996px;width:200px;text-align:center;top:494.30px;font-size:8.4px;color:#5f5f5f;">9</div>
<div class="t" style="left:491.82849999999996px;width:200px;text-align:center;top:507.10px;font-size:8.4px;color:#5f5f5f;">月</div>
<div class="t" style="left:503.4805px;width:200px;text-align:center;top:494.30px;font-size:8.4px;color:#5f5f5f;">1</div>
<div class="t" style="left:503.4805px;width:200px;text-align:center;top:507.10px;font-size:8.4px;color:#5f5f5f;">月</div>
<div class="t" style="left:515.1324999999999px;width:200px;text-align:center;top:494.30px;font-size:8.4px;color:#5f5f5f;">5</div>
<div class="t" style="left:515.1324999999999px;width:200px;text-align:center;top:507.10px;font-size:8.4px;color:#5f5f5f;">月</div>
<div class="t" style="left:526.7845px;width:200px;text-align:center;top:494.30px;font-size:8.4px;color:#5f5f5f;">9</div>
<div class="t" style="left:526.7845px;width:200px;text-align:center;top:507.10px;font-size:8.4px;color:#5f5f5f;">月</div>
<div class="t" style="left:538.4365px;width:200px;text-align:center;top:494.30px;font-size:8.4px;color:#5f5f5f;">1</div>
<div class="t" style="left:538.4365px;width:200px;text-align:center;top:507.10px;font-size:8.4px;color:#5f5f5f;">月</div>
<div class="t" style="left:550.0885px;width:200px;text-align:center;top:494.30px;font-size:8.4px;color:#5f5f5f;">5</div>
<div class="t" style="left:550.0885px;width:200px;text-align:center;top:507.10px;font-size:8.4px;color:#5f5f5f;">月</div>
<div class="t" style="left:561.7405px;width:200px;text-align:center;top:494.30px;font-size:8.4px;color:#5f5f5f;">9</div>
<div class="t" style="left:561.7405px;width:200px;text-align:center;top:507.10px;font-size:8.4px;color:#5f5f5f;">月</div>
<div class="t" style="left:573.3924999999999px;width:200px;text-align:center;top:494.30px;font-size:8.4px;color:#5f5f5f;">1</div>
<div class="t" style="left:573.3924999999999px;width:200px;text-align:center;top:507.10px;font-size:8.4px;color:#5f5f5f;">月</div>
<div class="t" style="left:585.0445px;width:200px;text-align:center;top:494.30px;font-size:8.4px;color:#5f5f5f;">5</div>
<div class="t" style="left:585.0445px;width:200px;text-align:center;top:507.10px;font-size:8.4px;color:#5f5f5f;">月</div>
<div class="t" style="left:596.6965px;width:200px;text-align:center;top:494.30px;font-size:8.4px;color:#5f5f5f;">9</div>
<div class="t" style="left:596.6965px;width:200px;text-align:center;top:507.10px;font-size:8.4px;color:#5f5f5f;">月</div>
<div class="t" style="left:608.3485px;width:200px;text-align:center;top:494.30px;font-size:8.4px;color:#5f5f5f;">1</div>
<div class="t" style="left:608.3485px;width:200px;text-align:center;top:507.10px;font-size:8.4px;color:#5f5f5f;">月</div>
<div class="t" style="left:620.0005px;width:200px;text-align:center;top:494.30px;font-size:8.4px;color:#5f5f5f;">5</div>
<div class="t" style="left:620.0005px;width:200px;text-align:center;top:507.10px;font-size:8.4px;color:#5f5f5f;">月</div>
<div class="t" style="left:379.678px;width:200px;text-align:center;top:527.20px;font-size:8.4px;color:#5f5f5f;">2018</div>
<div class="t" style="left:414.634px;width:200px;text-align:center;top:527.20px;font-size:8.4px;color:#5f5f5f;">2019</div>
<div class="t" style="left:449.59000000000003px;width:200px;text-align:center;top:527.20px;font-size:8.4px;color:#5f5f5f;">2020</div>
<div class="t" style="left:484.54599999999994px;width:200px;text-align:center;top:527.20px;font-size:8.4px;color:#5f5f5f;">2021</div>
<div class="t" style="left:519.502px;width:200px;text-align:center;top:527.20px;font-size:8.4px;color:#5f5f5f;">2022</div>
<div class="t" style="left:554.458px;width:200px;text-align:center;top:527.20px;font-size:8.4px;color:#5f5f5f;">2023</div>
<div class="t" style="left:589.414px;width:200px;text-align:center;top:527.20px;font-size:8.4px;color:#5f5f5f;">2024</div>
<div class="t" style="left:615.631px;width:200px;text-align:center;top:527.20px;font-size:8.4px;color:#5f5f5f;">2025</div>
<div class="t" style="left:493.28499999999997px;width:200px;text-align:center;top:547.20px;font-size:9.2px;color:#5f5f5f;">季節調整系列</div>
<div class="abs " style="left:432.2px;top:566.2px;width:40.80000000000001px;height:12.799999999999955px;background:linear-gradient(#dedede,#c9c9c9)"></div>
<div class="t" style="left:434.7px;top:568.55px;font-size:8.7px;color:#111;">系列</div>
<svg style="left:456.5px;top:568.1px" width="14.500" height="10" viewBox="0 0 14.500 10"><path d="M0 6.500h3.600L1.800 8.700z" fill="#333"/><path d="M4.500 .5h9.500L10.300 4.500V9.500H8.200V4.500z" fill="#555"/></svg>
<div class="abs " style="left:475px;top:566.2px;width:49.5px;height:12.799999999999955px;background:linear-gradient(#dedede,#c9c9c9)"></div>
<div class="t" style="left:477.5px;top:568.55px;font-size:8.7px;color:#111;">日付 (年)</div>
<svg style="left:514.7px;top:571.3000000000001px" width="5.500" height="3.700" viewBox="0 0 6 4"><path d="M0 .3h6L3 3.700z" fill="#333"/></svg>
<div class="abs " style="left:526.3px;top:566.2px;width:50.30000000000007px;height:12.799999999999955px;background:linear-gradient(#dedede,#c9c9c9)"></div>
<div class="t" style="left:528.8px;top:568.55px;font-size:8.7px;color:#111;">日付 (月)</div>
<svg style="left:566.8000000000001px;top:571.3000000000001px" width="5.500" height="3.700" viewBox="0 0 6 4"><path d="M0 .3h6L3 3.700z" fill="#333"/></svg>
<div class="abs " style="left:870.2px;top:566.4px;width:11.3px;height:12.8px;background:linear-gradient(#dedede,#cdcdcd)"></div>
<div class="abs " style="left:883px;top:566.4px;width:11.3px;height:12.8px;background:linear-gradient(#dedede,#cdcdcd)"></div>
<div class="t" style="left:775.8px;width:200px;text-align:center;top:566.80px;font-size:11px;color:#555;font-weight:700">+</div>
<div class="t" style="left:788.6px;width:200px;text-align:center;top:566.50px;font-size:11px;color:#555;font-weight:700">−</div>
<div class="abs " style="left:739px;top:269.8px;width:156.70000000000005px;height:12.599999999999966px;background:linear-gradient(#dedede,#c9c9c9)"></div>
<div class="t" style="left:741.5px;top:272.05px;font-size:8.7px;color:#111;">表</div>
<svg style="left:879.2px;top:271.6px" width="14.500" height="10" viewBox="0 0 14.500 10"><path d="M0 6.500h3.600L1.800 8.700z" fill="#333"/><path d="M4.500 .5h9.500L10.300 4.500V9.500H8.200V4.500z" fill="#555"/></svg>
<div class="abs " style="left:739px;top:283.9px;width:156.70000000000005px;height:13.100000000000023px;background:linear-gradient(#dedede,#c9c9c9)"></div>
<div class="t" style="left:741.5px;top:286.40px;font-size:8.7px;color:#111;">品目名称</div>
<svg style="left:879.2px;top:285.95px" width="14.500" height="10" viewBox="0 0 14.500 10"><path d="M0 6.500h3.600L1.800 8.700z" fill="#333"/><path d="M4.500 .5h9.500L10.300 4.500V9.500H8.200V4.500z" fill="#555"/></svg>
<div class="abs " style="left:739px;top:298.7px;width:156.70000000000005px;height:13.0px;background:linear-gradient(#dedede,#c9c9c9)"></div>
<div class="t" style="left:741.5px;top:301.15px;font-size:8.7px;color:#111;">財の種別</div>
<svg style="left:885.9000000000001px;top:303.9px" width="5.500" height="3.700" viewBox="0 0 6 4"><path d="M0 .3h6L3 3.700z" fill="#333"/></svg>
<div class="t" style="left:765.9px;top:317.10px;font-size:8.8px;color:#5f5f5f;transform:scaleX(1.0313);transform-origin:0 50%;">在庫 - 自動車工業 - 鉱工業用生</div>
<div class="t" style="left:765.9px;top:332.80px;font-size:8.8px;color:#5f5f5f;">産財</div>
<div class="t" style="left:765.9px;top:345.80px;font-size:8.8px;color:#5f5f5f;transform:scaleX(1.0279);transform-origin:0 50%;">在庫 - 自動車工業 - 資本財</div>
<div class="t" style="left:765.9px;top:374.50px;font-size:8.8px;color:#5f5f5f;transform:scaleX(1.0313);transform-origin:0 50%;">在庫 - 自動車工業 - 耐久消費財</div>
<div class="abs " style="left:392.3px;top:81.3px;width:21.3px;height:21.3px;background:#fff;border:1px solid #ababab"></div>
<svg style="left:395.500px;top:84.900px" width="13" height="13" viewBox="0 0 12 12" stroke="#4a9c6c" stroke-width="1"><path d="M6 0v12M0 6h12"/></svg>
<div class="abs " style="left:392.3px;top:110.8px;width:21.3px;height:21.9px;background:#fff;border:1px solid #ababab"></div>
<svg style="left:395px;top:114.500px" width="15" height="15" viewBox="0 0 15 15"><path d="M13.500 1.200L7.300 8.300 8.700 9.700 14.300 2z" fill="#fff" stroke="#777" stroke-width="0.800"/><path d="M6.500 9C4 8.500 2.500 10.500 0.500 12.500c3 1.500 6.500 1 8-1.500z" fill="#3d7ebf"/></svg>
<!-- grid.chrome -->
<div class="abs " style="left:910px;top:61px;width:16px;height:535px;background:#e6eaf1"></div>
<div class="abs " style="left:912px;top:61.9px;width:12.7px;height:535.4px;background:#f3f5f8;border-radius:6.300px"></div>
<svg style="left:914.700px;top:64.800px" width="7.600" height="6" viewBox="0 0 9 6"><path d="M4.500 0.300L8.700 5.700H.3z" fill="#666"/></svg>
<div class="abs " style="left:914.9px;top:74.2px;width:7.1px;height:49.6px;background:#737373;border-radius:3.500px"></div>
<svg style="left:914.500px;top:588px" width="7.600" height="6" viewBox="0 0 9 6"><path d="M4.500 5.700L8.700 .3H.3z" fill="#666"/></svg>
<div class="abs " style="left:0px;top:595.5px;width:926px;height:25.5px;background:#e6eaf1"></div>
<svg style="left:19px;top:603.500px" width="6" height="10" viewBox="0 0 6 10" fill="none" stroke="#9a9a9a" stroke-width="1.100"><path d="M5 .700L1 5l4 4.300"/></svg>
<svg style="left:44px;top:603.500px" width="6" height="10" viewBox="0 0 6 10" fill="none" stroke="#9a9a9a" stroke-width="1.100"><path d="M1 .700L5 5 1 9.300"/></svg>
<div class="t" style="left:95px;top:601.05px;font-size:12.5px;color:#333;transform:scaleX(0.9530);transform-origin:0 50%;">data</div>
<div class="abs " style="left:129.5px;top:601px;width:1px;height:15px;background:#cdcdcd"></div>
<div class="abs " style="left:133.2px;top:596px;width:41px;height:21.5px;background:#fff;border-radius:0 0 4px 4px"></div>
<div class="t" style="left:141.2px;top:600.05px;font-size:12.5px;color:#333;transform:scaleX(0.9657);transform-origin:0 50%;">pivot</div>
<div class="abs " style="left:139.5px;top:614.2px;width:28.5px;height:1.8px;background:#107C41;border-radius:1px"></div>
<div class="abs " style="left:177px;top:601px;width:1px;height:15px;background:#cdcdcd"></div>
<svg style="left:210px;top:603px" width="10" height="10" viewBox="0 0 10 10" stroke="#333" stroke-width="1.100"><path d="M5 0v10M0 5h10"/></svg>
<div class="abs " style="left:557.5px;top:603.5px;width:2px;height:2px;background:#444;border-radius:50%"></div>
<div class="abs " style="left:557.5px;top:607px;width:2px;height:2px;background:#444;border-radius:50%"></div>
<div class="abs " style="left:557.5px;top:610.5px;width:2px;height:2px;background:#444;border-radius:50%"></div>
<div class="abs " style="left:571px;top:601.8px;width:340.4px;height:12.7px;background:#f3f5f8;border-radius:6.300px"></div>
<svg style="left:575px;top:604.200px" width="6" height="8" viewBox="0 0 6 8"><path d="M.3 4L5.700 .2v7.600z" fill="#666"/></svg>
<div class="abs " style="left:584px;top:604.7px;width:263.5px;height:7px;background:#737373;border-radius:3.500px"></div>
<svg style="left:902.600px;top:604.200px" width="6" height="8" viewBox="0 0 6 8"><path d="M5.700 4L.3 .2v7.600z" fill="#666"/></svg>
<!-- chart.handles -->
<div class="abs " style="left:419.90000000000003px;top:77.69999999999999px;width:9px;height:9px;background:#fff;border:1.500px solid #4f4f4f;border-radius:50%"></div>
<div class="abs " style="left:659.65px;top:77.69999999999999px;width:9px;height:9px;background:#fff;border:1.500px solid #4f4f4f;border-radius:50%"></div>
<div class="abs " style="left:899.4px;top:77.69999999999999px;width:9px;height:9px;background:#fff;border:1.500px solid #4f4f4f;border-radius:50%"></div>
<div class="abs " style="left:419.90000000000003px;top:330.20000000000005px;width:9px;height:9px;background:#fff;border:1.500px solid #4f4f4f;border-radius:50%"></div>
<div class="abs " style="left:899.4px;top:330.20000000000005px;width:9px;height:9px;background:#fff;border:1.500px solid #4f4f4f;border-radius:50%"></div>
<div class="abs " style="left:419.90000000000003px;top:582.7px;width:9px;height:9px;background:#fff;border:1.500px solid #4f4f4f;border-radius:50%"></div>
<div class="abs " style="left:659.65px;top:582.7px;width:9px;height:9px;background:#fff;border:1.500px solid #4f4f4f;border-radius:50%"></div>
<div class="abs " style="left:899.4px;top:582.7px;width:9px;height:9px;background:#fff;border:1.500px solid #4f4f4f;border-radius:50%"></div>
<!-- panel.build -->
<div class="abs " style="left:926px;top:61px;width:274px;height:560px;background:#f1f1f1;border-left:1px solid #e4e4e4"></div>
<div class="t" style="left:936px;top:71.95px;font-size:12.5px;color:#222;font-weight:700;transform:scaleX(0.7069);transform-origin:0 50%;">ピボットグラフのフィールド</div>
<svg style="left:1152.500px;top:75px" width="10" height="6" viewBox="0 0 10 6" fill="none" stroke="#444" stroke-width="1"><path d="M.5.500L5 5 9.500.5"/></svg>
<svg style="left:1178.500px;top:74px" width="8" height="8" viewBox="0 0 8 8" fill="none" stroke="#444" stroke-width="1"><path d="M.5.500l7 7M7.500.5l-7 7"/></svg>
<div class="t" style="left:936.8px;top:96.25px;font-size:10.5px;color:#222;font-weight:700;transform:scaleX(0.7087);transform-origin:0 50%;">アクティブ</div>
<div class="t" style="left:992.8px;top:96.50px;font-size:10px;color:#444;transform:scaleX(0.7749);transform-origin:0 50%;">すべて</div>
<div class="abs " style="left:936.3px;top:111.5px;width:38.7px;height:2px;background:#107C41;border-radius:1px"></div>
<div class="t" style="left:936.8px;top:123.90px;font-size:9.8px;color:#444;transform:scaleX(0.7577);transform-origin:0 50%;">レポートに追加するフィールドを選択してください:</div>
<div class="abs " style="left:1155.2px;top:117.2px;width:35.5px;height:21.4px;background:#fff;border:1px solid #c8c8c8"></div>
<svg style="left:1162.300px;top:121.300px" width="13" height="13" viewBox="0 0 13 13" fill="none" stroke="#444" stroke-width="1.050" stroke-linejoin="round"><circle cx="6.500" cy="6.500" r="2.100"/><path d="M4.76 2.35L4.98 0.59L8.02 0.59L8.24 2.35L9.22 2.92L10.86 2.23L12.38 4.86L10.96 5.94L10.96 7.06L12.38 8.14L10.86 10.77L9.22 10.08L8.24 10.65L8.02 12.41L4.98 12.41L4.76 10.65L3.78 10.08L2.14 10.77L0.62 8.14L2.04 7.06L2.04 5.94L0.62 4.86L2.14 2.23L3.78 2.92z"/></svg>
<svg style="left:1180px;top:126.3px" width="6" height="4" viewBox="0 0 6 4" fill="none" stroke="#333" stroke-width="1.250"><path d="M.6.600L3 3 5.400.6"/></svg>
<div class="abs " style="left:936.3px;top:149.4px;width:254.4px;height:18.4px;background:#fff;border:1px solid #c2c2c2"></div>
<div class="t" style="left:941.7px;top:154.05px;font-size:9.5px;color:#8a8a8a;">検索</div>
<svg style="left:1175.300px;top:152.300px" width="12.500" height="12.500" viewBox="0 0 11 11" fill="none" stroke="#444" stroke-width="0.950"><circle cx="6.600" cy="4.400" r="3.500"/><path d="M4.100 6.900L.5 10.500"/></svg>
<div class="abs " style="left:936.4px;top:182.2px;width:254.5px;height:157.1px;background:#fff;border:1px solid #c6c6c6;overflow:hidden"></div>
<svg style="left:942.500px;top:187px" width="5" height="5" viewBox="0 0 5 5" fill="none" stroke="#666" stroke-width="0.9"><path d="M4.500 0v4.500H0"/></svg>
<svg style="left:951.400px;top:183.900px" width="12.800" height="12.800" viewBox="0 0 13 13" fill="none" stroke="#555" stroke-width="0.9"><rect x=".6" y=".6" width="11.800" height="11.800"/><path d="M.6 3.700h11.800M.6 6.600h11.800M.6 9.500h11.800M4.500 .6v11.800M8.500 .6v11.800"/></svg>
<div class="t" style="left:966px;top:185.10px;font-size:11px;color:#222;font-weight:700;">_00550_meti_00550300_b2020_full_lis...</div>
<div class="abs " style="left:966px;top:197.6px;width:10px;height:10px;background:#fff;border:1px solid #9a9a9a;border-radius:1.500px"></div>
<div class="t" style="left:980.8px;top:200.70px;font-size:9.6px;color:#222;">日付分類</div>
<svg style="left:1164px;top:198.7px" width="11" height="12" viewBox="0 0 10 10" preserveAspectRatio="none" fill="none" stroke="#555" stroke-width="0.9"><path d="M.6.600h8.800L6 4.800V9L4 7.800V4.800z"/></svg>
<div class="abs " style="left:966px;top:216.9px;width:10px;height:10px;background:#fff;border:1px solid #9a9a9a;border-radius:1.500px"></div>
<div class="t" style="left:980.8px;top:220.00px;font-size:9.6px;color:#222;transform:scaleX(0.7755);transform-origin:0 50%;">年・期・月</div>
<div class="abs " style="left:966px;top:236.2px;width:10px;height:10px;background:#fff;border:1px solid #9a9a9a;border-radius:1.500px"></div>
<div class="t" style="left:980.8px;top:239.30px;font-size:9.6px;color:#222;">日付</div>
<div class="abs " style="left:966px;top:255.50000000000003px;width:10px;height:10px;background:#fff;border:1px solid #9a9a9a;border-radius:1.500px"></div>
<div class="t" style="left:980.8px;top:258.60px;font-size:9.6px;color:#222;">区分</div>
<div class="abs " style="left:966px;top:274.79999999999995px;width:10px;height:10px;background:#107C41;border-radius:1.500px"></div>
<svg style="left:967.700px;top:276.9px" width="7" height="6" viewBox="0 0 7 6" fill="none" stroke="#fff" stroke-width="1.100"><path d="M.7 3l1.900 1.900L6.300 1"/></svg>
<div class="t" style="left:980.8px;top:277.90px;font-size:9.6px;color:#111;font-weight:700">系列</div>
<svg style="left:1164px;top:275.9px" width="11" height="12" viewBox="0 0 10 10" preserveAspectRatio="none" fill="none" stroke="#555" stroke-width="0.9"><path d="M.6.600h8.800L6 4.800V9L4 7.800V4.800z"/></svg>
<div class="abs " style="left:966px;top:294.09999999999997px;width:10px;height:10px;background:#107C41;border-radius:1.500px"></div>
<svg style="left:967.700px;top:296.2px" width="7" height="6" viewBox="0 0 7 6" fill="none" stroke="#fff" stroke-width="1.100"><path d="M.7 3l1.900 1.900L6.300 1"/></svg>
<div class="t" style="left:980.8px;top:297.20px;font-size:9.6px;color:#111;font-weight:700">表</div>
<svg style="left:1164px;top:295.2px" width="11" height="12" viewBox="0 0 10 10" preserveAspectRatio="none" fill="none" stroke="#555" stroke-width="0.9"><path d="M.6.600h8.800L6 4.800V9L4 7.800V4.800z"/></svg>
<div class="abs " style="left:966px;top:313.4px;width:10px;height:10px;background:#107C41;border-radius:1.500px"></div>
<svg style="left:967.700px;top:315.5px" width="7" height="6" viewBox="0 0 7 6" fill="none" stroke="#fff" stroke-width="1.100"><path d="M.7 3l1.900 1.900L6.300 1"/></svg>
<div class="t" style="left:980.8px;top:316.50px;font-size:9.6px;color:#111;font-weight:700">財の種別</div>
<div class="abs" style="left:960px;top:330px;width:120px;height:8.800px;overflow:hidden"><div class="abs" style="left:6px;top:3px;width:9.600px;height:9.600px;border:1px solid #8a8a8a;background:#fff"></div><div class="t" style="left:20.800px;top:5.500px;font-size:9.600px;color:#222">品目番号</div></div>
<div class="abs " style="left:1177px;top:183.2px;width:13px;height:155px;background:#f0f0f0"></div>
<svg style="left:1180px;top:186.500px" width="7" height="5" viewBox="0 0 7 5"><path d="M3.500 .3L6.800 4.700H.2z" fill="#555"/></svg>
<div class="abs " style="left:1180px;top:196.4px;width:6.8px;height:73.4px;background:#6e6e6e"></div>
<svg style="left:1180px;top:329.500px" width="7" height="5" viewBox="0 0 7 5"><path d="M3.500 4.700L6.800 .3H.2z" fill="#555"/></svg>
<div class="abs " style="left:937px;top:351px;width:256px;height:0px;border-top:1px dotted #cfcfcf"></div>
<div class="t" style="left:939.4px;top:357.30px;font-size:9.8px;color:#444;transform:scaleX(0.7184);transform-origin:0 50%;">次のボックス間でフィールドをドラッグしてください:</div>
<svg style="left:942px;top:383px" width="8" height="9" viewBox="0 0 8 9"><path d="M0 0h8L5 3.800V9H3V3.800z" fill="#8a8a8a"/></svg>
<div class="t" style="left:956.2px;top:382.40px;font-size:10px;color:#333;transform:scaleX(0.6384);transform-origin:0 50%;">フィルター</div>
<div class="abs " style="left:939px;top:396.5px;width:121px;height:78.1px;background:#fff"></div>
<div class="abs " style="left:1064.2px;top:379.7px;width:1px;height:198.5px;background:#c4c4c4"></div>
<svg style="left:1071px;top:383px" width="6" height="8" viewBox="0 0 6 8"><path d="M0 0h2v8H0zM3.500 0h2v8h-2z" fill="#a8a8a8"/></svg>
<div class="t" style="left:1084px;top:382.15px;font-size:10.5px;color:#333;transform:scaleX(0.9399);transform-origin:0 50%;">凡例 (系列)</div>
<div class="abs " style="left:1067px;top:396.5px;width:124.1px;height:78.1px;background:#fff"></div>
<div class="abs " style="left:1067px;top:398.3px;width:124.09999999999991px;height:15.899999999999977px;background:#fff;border:1px solid #d0d0d0"></div>
<div class="t" style="left:1073.3px;top:401.75px;font-size:9.6px;color:#222;">表</div>
<svg style="left:1178.3px;top:403.75px" width="6" height="4" viewBox="0 0 6 4" fill="none" stroke="#333" stroke-width="1.250"><path d="M.6.600L3 3 5.400.6"/></svg>
<div class="abs " style="left:1067px;top:416.5px;width:124.09999999999991px;height:15.899999999999977px;background:#fff;border:1px solid #d0d0d0"></div>
<div class="t" style="left:1073.3px;top:419.95px;font-size:9.6px;color:#222;">品目名称</div>
<svg style="left:1178.3px;top:421.95px" width="6" height="4" viewBox="0 0 6 4" fill="none" stroke="#333" stroke-width="1.250"><path d="M.6.600L3 3 5.400.6"/></svg>
<div class="abs " style="left:1067px;top:434.5px;width:124.09999999999991px;height:15.899999999999977px;background:#fff;border:1px solid #d0d0d0"></div>
<div class="t" style="left:1073.3px;top:437.95px;font-size:9.6px;color:#222;">財の種別</div>
<svg style="left:1178.3px;top:439.95px" width="6" height="4" viewBox="0 0 6 4" fill="none" stroke="#333" stroke-width="1.250"><path d="M.6.600L3 3 5.400.6"/></svg>
<div class="abs " style="left:939px;top:478.7px;width:252px;height:1px;background:#c4c4c4"></div>
<svg style="left:942.500px;top:487.500px" width="8" height="7" viewBox="0 0 8 7"><path d="M0 0h8v2H0zM0 3h8v1.500H0zM0 5.500h8V7H0z" fill="#a8a8a8"/></svg>
<div class="t" style="left:956.5px;top:486.15px;font-size:10.5px;color:#333;transform:scaleX(0.9340);transform-origin:0 50%;">軸 (分類項目)</div>
<div class="t" style="left:1070.7px;top:485.75px;font-size:10.5px;color:#777;font-family:&quot;Liberation Serif&quot;,serif">Σ</div>
<div class="t" style="left:1084px;top:486.60px;font-size:9.6px;color:#222;">値</div>
<div class="abs " style="left:939px;top:501.1px;width:121.3px;height:77.1px;background:#fff"></div>
<div class="abs " style="left:939px;top:501.6px;width:121.29999999999995px;height:16.299999999999955px;background:#fff;border:1px solid #d0d0d0"></div>
<div class="t" style="left:946px;top:505.25px;font-size:9.6px;color:#222;">系列</div>
<svg style="left:1047.5px;top:507.25px" width="6" height="4" viewBox="0 0 6 4" fill="none" stroke="#333" stroke-width="1.250"><path d="M.6.600L3 3 5.400.6"/></svg>
<div class="abs " style="left:939px;top:520.3px;width:121.29999999999995px;height:15.800000000000068px;background:#fff;border:1px solid #d0d0d0"></div>
<div class="t" style="left:946px;top:523.70px;font-size:9.6px;color:#222;">日付 (年)</div>
<svg style="left:1047.5px;top:525.7px" width="6" height="4" viewBox="0 0 6 4" fill="none" stroke="#333" stroke-width="1.250"><path d="M.6.600L3 3 5.400.6"/></svg>
<div class="abs " style="left:939px;top:538.5px;width:121.29999999999995px;height:15.799999999999955px;background:#fff;border:1px solid #d0d0d0"></div>
<div class="t" style="left:946px;top:541.90px;font-size:9.6px;color:#222;">日付 (月)</div>
<svg style="left:1047.5px;top:543.9px" width="6" height="4" viewBox="0 0 6 4" fill="none" stroke="#333" stroke-width="1.250"><path d="M.6.600L3 3 5.400.6"/></svg>
<div class="abs " style="left:1066.6px;top:501.1px;width:124.4px;height:77.1px;background:#fff"></div>
<div class="abs " style="left:1067px;top:501.6px;width:124.09999999999991px;height:16.299999999999955px;background:#fff;border:1px solid #d0d0d0"></div>
<div class="t" style="left:1073.1px;top:505.25px;font-size:9.6px;color:#222;transform:scaleX(1.0207);transform-origin:0 50%;">合計 / 2020年基準指数</div>
<svg style="left:1178.3px;top:507.25px" width="6" height="4" viewBox="0 0 6 4" fill="none" stroke="#333" stroke-width="1.250"><path d="M.6.600L3 3 5.400.6"/></svg>
<div class="abs " style="left:941.1px;top:599.3px;width:9.9px;height:9.4px;background:#fff;border:1px solid #9a9a9a;border-radius:2px"></div>
<div class="t" style="left:956.5px;top:599.50px;font-size:9.8px;color:#222;transform:scaleX(0.7915);transform-origin:0 50%;">レイアウトの更新を保留する</div>
<div class="abs " style="left:1163.8px;top:594.2px;width:27.2px;height:19px;border:1px solid #e3e3e3;background:#f1f1f1"></div>
<div class="t" style="left:1077.4px;width:200px;text-align:center;top:600.25px;font-size:9.5px;color:#c2c2c2;">更新</div>
<!-- titlebar.build -->
<div class="abs " style="left:0px;top:0px;width:1200px;height:37.5px;background:#107C41"></div>
<svg style="left:12.300px;top:12px" width="13" height="13" viewBox="0 0 16 16"><rect x="4.5" y="1.5" width="10" height="13" fill="none" stroke="#fff" stroke-width="1"/><path d="M9.5 1.5v13M4.5 5h10M4.5 8h10M4.5 11h10" stroke="#fff" stroke-width="0.9" fill="none"/><rect x="0.5" y="3.5" width="8" height="9" fill="#fff"/><path d="M2.5 5.5l4 5M6.5 5.5l-4 5" stroke="#107C41" stroke-width="1.3"/></svg>
<div class="t" style="left:38.4px;top:14.20px;font-size:10px;color:#fff;transform:scaleX(0.9250);transform-origin:0 50%;">自動保存</div>
<div class="abs " style="left:81px;top:10.4px;width:37px;height:15.8px;background:#fff;border-radius:8px"></div>
<div class="t" style="left:86.4px;top:14.10px;font-size:9px;color:#185c37;transform:scaleX(0.7216);transform-origin:0 50%;">オン</div>
<div class="abs " style="left:104.2px;top:12.5px;width:11.8px;height:11.8px;background:#107C41;border-radius:50%"></div>
<svg style="left:128px;top:12px" width="14" height="14" viewBox="0 0 14 14" fill="none" stroke="#fff" stroke-width="1.1"><path d="M1 2.5A1.5 1.5 0 0 1 2.5 1h8L13 3.5V6"/><path d="M1 2.5v9A1.5 1.5 0 0 0 2.500 13H5"/><path d="M3.500 1v3.500h6V1"/><path d="M3.500 13V8.500h3"/><path d="M8 10a3 3 0 0 1 5-1.500M13 11a3 3 0 0 1-5 1.500"/><path d="M13 6.500v2h-2M8 14.500v-2h2" stroke-width="0.9"/></svg>
<svg style="left:150px;top:11.500px" width="13.500" height="13.500" viewBox="0 0 16 16" fill="none" stroke="#fff" stroke-width="1.400"><path d="M2 2v5.500h5.500"/><path d="M2.500 7C4.500 3.500 8.500 2 11.500 4.500c3 2.600 1.500 6.500-4 9.500"/></svg>
<svg style="left:166.500px;top:16.300px" width="6" height="4.300" viewBox="0 0 7 5" fill="none" stroke="#fff" stroke-width="1.1"><path d="M1 1l2.500 2.500L6 1"/></svg>
<svg style="left:180.500px;top:11.500px" width="13.500" height="13.500" viewBox="0 0 16 16" fill="none" stroke="#5a9f7a" stroke-width="1.300"><path d="M14 2v5.500H8.500"/><path d="M13.500 7C11.500 3.500 7.500 2 4.500 4.500c-3 2.600-1.500 6.500 4 9.500"/></svg>
<svg style="left:197px;top:16.300px" width="6" height="4.300" viewBox="0 0 7 5" fill="none" stroke="#5fa47c" stroke-width="1.1"><path d="M1 1l2.500 2.500L6 1"/></svg>
<svg style="left:212.500px;top:16px" width="6.500" height="6.500" viewBox="0 0 8 8" fill="none" stroke="#fff" stroke-width="1.1"><path d="M1 1.500h6M1.500 4l2.500 2.500L6.500 4"/></svg>
<div class="t" style="left:238px;top:14.05px;font-size:10.5px;color:#fff;">00550-meti-00550300-b2020-full-list_2-za···</div>
<div class="t" style="left:449.5px;top:14.30px;font-size:10px;color:#fff;transform:scaleX(1.0155);transform-origin:0 50%;">• 保存済み</div>
<svg style="left:499.500px;top:16.500px" width="8" height="5" viewBox="0 0 10 6" fill="none" stroke="#fff" stroke-width="1.1"><path d="M1 1l4 4 4-4"/></svg>
<div class="abs " style="left:536px;top:7px;width:286.5px;height:23.5px;background:#cfe3d6;border-radius:3px"></div>
<svg style="left:546px;top:12px" width="13" height="13" viewBox="0 0 13 13" fill="none" stroke="#107C41" stroke-width="1.2"><circle cx="8" cy="5" r="3.800"/><path d="M5.300 7.700L1 12"/></svg>
<div class="t" style="left:568px;top:13.60px;font-size:10.8px;color:#2b7a4b;">検索</div>
<div class="abs " style="left:1023px;top:9.5px;width:19px;height:19px;background:#d6d6d6;border-radius:50%"></div>
<svg style="left:1026px;top:12px" width="13" height="14" viewBox="0 0 13 14" fill="none" stroke="#555" stroke-width="1.1"><circle cx="6.500" cy="4.500" r="2.800"/><path d="M1.500 13c0-3.500 2-5 5-5s5 1.500 5 5"/></svg>
<svg style="left:1066px;top:13.500px" width="8" height="10.500" viewBox="0 0 11 14" fill="none" stroke="#fff" stroke-width="1.1"><path d="M5.500 1a3.800 3.800 0 0 0-2.200 6.900c.5.500.7 1 .7 1.600h3c0-.6.200-1.100.7-1.600A3.800 3.800 0 0 0 5.500 1z"/><path d="M4 11.500h3M4.500 13h2"/></svg>
<div class="abs " style="left:1102px;top:18px;width:9px;height:1.2px;background:#fff"></div>
<svg style="left:1139.500px;top:14.500px" width="9" height="9" viewBox="0 0 10 10" fill="none" stroke="#fff" stroke-width="1.1"><rect x="0.600" y="2.400" width="7" height="7" rx="1.500"/><path d="M2.600 2.400V2a1.500 1.500 0 0 1 1.500-1.400H8A1.500 1.500 0 0 1 9.400 2v3.900A1.500 1.500 0 0 1 8 7.400h-.4"/></svg>
<svg style="left:1177px;top:14.500px" width="9" height="9" viewBox="0 0 9 9" fill="none" stroke="#fff" stroke-width="1.200"><path d="M.5.5l8 8M8.500.5l-8 8"/></svg>
<!-- ribbon.build -->
<div class="abs " style="left:0px;top:37.5px;width:1200px;height:23.5px;background:#e6eaf1"></div>
<div class="t" style="left:9px;top:43.75px;font-size:11.5px;color:#333;transform:scaleX(0.6196);transform-origin:0 50%;">ファイル</div>
<div class="t" style="left:53px;top:43.75px;font-size:11.5px;color:#333;transform:scaleX(0.7612);transform-origin:0 50%;">ホーム</div>
<div class="t" style="left:94px;top:43.75px;font-size:11.5px;color:#333;transform:scaleX(0.9565);transform-origin:0 50%;">挿入</div>
<div class="t" style="left:130px;top:43.75px;font-size:11.5px;color:#333;transform:scaleX(0.9565);transform-origin:0 50%;">描画</div>
<div class="t" style="left:168px;top:43.75px;font-size:11.5px;color:#333;transform:scaleX(0.7371);transform-origin:0 50%;">ページ レイアウト</div>
<div class="t" style="left:255px;top:43.75px;font-size:11.5px;color:#333;transform:scaleX(0.9565);transform-origin:0 50%;">数式</div>
<div class="t" style="left:292px;top:43.75px;font-size:11.5px;color:#333;transform:scaleX(0.7536);transform-origin:0 50%;">データ</div>
<div class="t" style="left:333px;top:43.75px;font-size:11.5px;color:#333;transform:scaleX(0.9130);transform-origin:0 50%;">校閲</div>
<div class="t" style="left:369px;top:43.75px;font-size:11.5px;color:#333;transform:scaleX(0.9565);transform-origin:0 50%;">表示</div>
<div class="t" style="left:406px;top:43.75px;font-size:11.5px;color:#333;transform:scaleX(0.9275);transform-origin:0 50%;">自動化</div>
<div class="t" style="left:453px;top:43.75px;font-size:11.5px;color:#333;transform:scaleX(0.7536);transform-origin:0 50%;">ヘルプ</div>
<div class="t" style="left:496px;top:43.75px;font-size:11.5px;color:#333;transform:scaleX(1.0343);transform-origin:0 50%;">Acrobat</div>
<div class="t" style="left:557px;top:43.75px;font-size:11.5px;color:#333;transform:scaleX(0.9941);transform-origin:0 50%;">Power Pivot</div>
<div class="t" style="left:636px;top:43.75px;font-size:11.5px;color:#23874f;transform:scaleX(0.7343);transform-origin:0 50%;">ピボットグラフ分析</div>
<div class="t" style="left:730px;top:43.75px;font-size:11.5px;color:#23874f;transform:scaleX(0.7174);transform-origin:0 50%;">デザイン</div>
<div class="t" style="left:779px;top:43.75px;font-size:11.5px;color:#23874f;transform:scaleX(0.9130);transform-origin:0 50%;">書式</div>
<div class="abs " style="left:1081px;top:40px;width:52.5px;height:18.5px;background:#fff;border:1px solid #bdbdbd;border-radius:3px"></div>
<svg style="left:1086.500px;top:45px" width="8.500" height="9" viewBox="0 0 10 10" fill="none" stroke="#333" stroke-width="1"><path d="M.8.8h8.400v5.700H4L2 8.700V6.500H.8z"/></svg>
<div class="t" style="left:1098.5px;top:44.00px;font-size:11px;color:#222;transform:scaleX(0.6932);transform-origin:0 50%;">コメント</div>
<div class="abs " style="left:1140px;top:40px;width:50.5px;height:18.5px;background:#107C41;border-radius:3px"></div>
<svg style="left:1143.500px;top:45px" width="8.500" height="8.500" viewBox="0 0 10 10" fill="none" stroke="#fff" stroke-width="1"><path d="M3.500 4H1.200v5h7V7"/><path d="M3 6.500C3.500 4 5 3 7 3V1.200L9.500 3.600 7 6V4.300C5.500 4.300 4 4.800 3 6.500z" stroke-width="0.9"/></svg>
<div class="t" style="left:1157.5px;top:44.00px;font-size:11px;color:#fff;font-weight:500;transform:scaleX(0.9091);transform-origin:0 50%;">共有</div>
<svg style="left:1182px;top:47.500px" width="6" height="4" viewBox="0 0 6 4" fill="none" stroke="#fff" stroke-width="1"><path d="M.7.700L3 3 5.300.7"/></svg>
</body></html>
